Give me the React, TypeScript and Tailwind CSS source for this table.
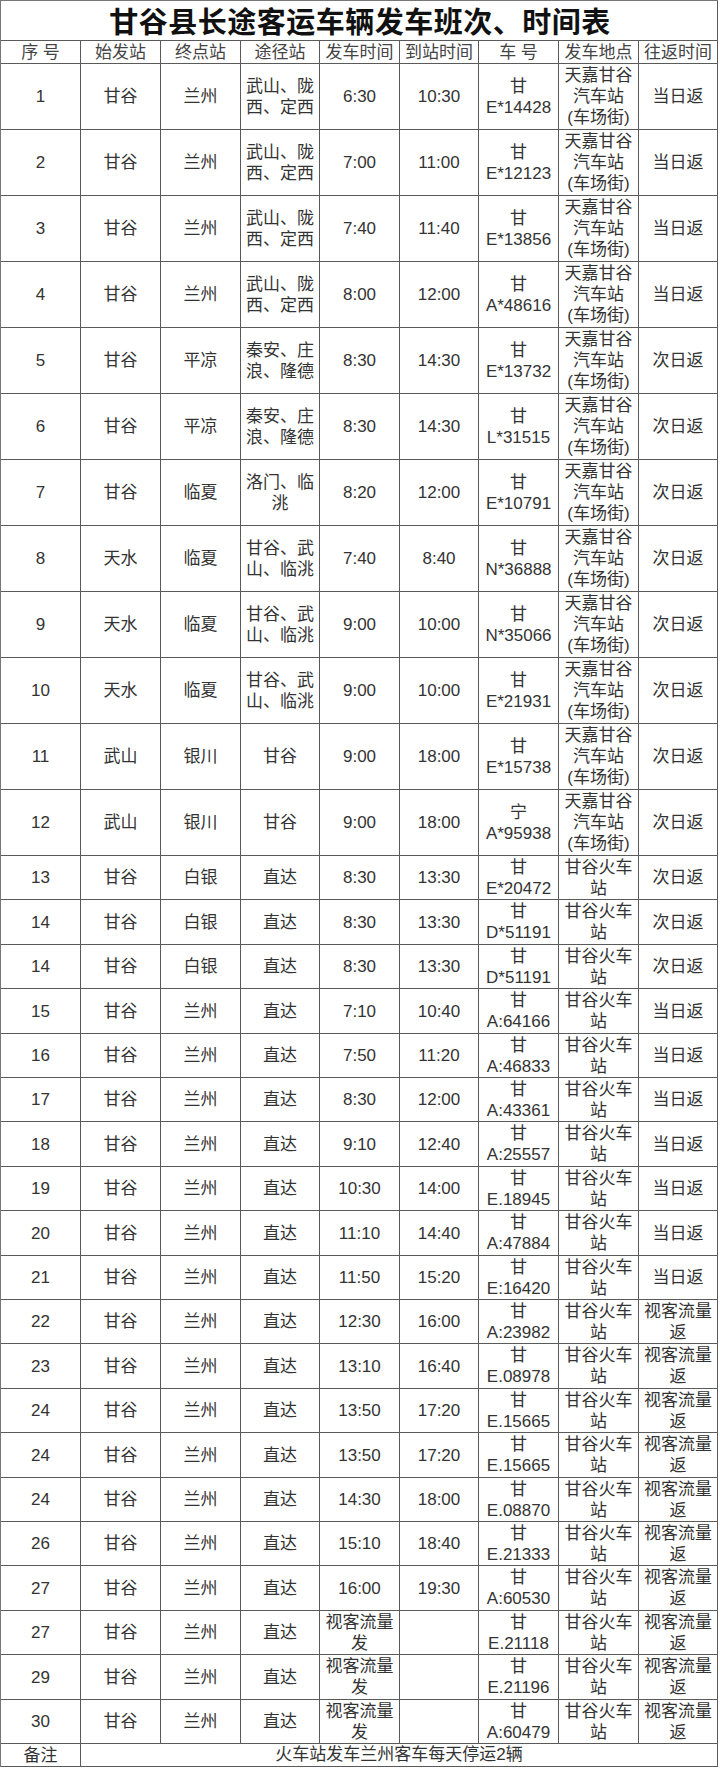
const TJ = "天嘉甘谷/汽车站/(车场街)"
const HC = "甘谷火车/站"
const SK = "视客流量/返"
const SF = "视客流量/发"

const head = ["序 号", "始发站", "终点站", "途径站", "发车时间", "到站时间", "车 号", "发车地点", "往返时间"]

// rows 1-12 (three-line rows)
const tallRows = [
  ["1", "甘谷", "兰州", "武山、陇/西、定西", "6:30", "10:30", "甘/E*14428", TJ, "当日返"],
  ["2", "甘谷", "兰州", "武山、陇/西、定西", "7:00", "11:00", "甘/E*12123", TJ, "当日返"],
  ["3", "甘谷", "兰州", "武山、陇/西、定西", "7:40", "11:40", "甘/E*13856", TJ, "当日返"],
  ["4", "甘谷", "兰州", "武山、陇/西、定西", "8:00", "12:00", "甘/A*48616", TJ, "当日返"],
  ["5", "甘谷", "平凉", "秦安、庄/浪、隆德", "8:30", "14:30", "甘/E*13732", TJ, "次日返"],
  ["6", "甘谷", "平凉", "秦安、庄/浪、隆德", "8:30", "14:30", "甘/L*31515", TJ, "次日返"],
  ["7", "甘谷", "临夏", "洛门、临/洮", "8:20", "12:00", "甘/E*10791", TJ, "次日返"],
  ["8", "天水", "临夏", "甘谷、武/山、临洮", "7:40", "8:40", "甘/N*36888", TJ, "次日返"],
  ["9", "天水", "临夏", "甘谷、武/山、临洮", "9:00", "10:00", "甘/N*35066", TJ, "次日返"],
  ["10", "天水", "临夏", "甘谷、武/山、临洮", "9:00", "10:00", "甘/E*21931", TJ, "次日返"],
  ["11", "武山", "银川", "甘谷", "9:00", "18:00", "甘/E*15738", TJ, "次日返"],
  ["12", "武山", "银川", "甘谷", "9:00", "18:00", "宁/A*95938", TJ, "次日返"],
]

// rows 13-30 (two-line rows)
const shortRows = [
  ["13", "甘谷", "白银", "直达", "8:30", "13:30", "甘/E*20472", HC, "次日返"],
  ["14", "甘谷", "白银", "直达", "8:30", "13:30", "甘/D*51191", HC, "次日返"],
  ["14", "甘谷", "白银", "直达", "8:30", "13:30", "甘/D*51191", HC, "次日返"],
  ["15", "甘谷", "兰州", "直达", "7:10", "10:40", "甘/A:64166", HC, "当日返"],
  ["16", "甘谷", "兰州", "直达", "7:50", "11:20", "甘/A:46833", HC, "当日返"],
  ["17", "甘谷", "兰州", "直达", "8:30", "12:00", "甘/A:43361", HC, "当日返"],
  ["18", "甘谷", "兰州", "直达", "9:10", "12:40", "甘/A:25557", HC, "当日返"],
  ["19", "甘谷", "兰州", "直达", "10:30", "14:00", "甘/E.18945", HC, "当日返"],
  ["20", "甘谷", "兰州", "直达", "11:10", "14:40", "甘/A:47884", HC, "当日返"],
  ["21", "甘谷", "兰州", "直达", "11:50", "15:20", "甘/E:16420", HC, "当日返"],
  ["22", "甘谷", "兰州", "直达", "12:30", "16:00", "甘/A:23982", HC, SK],
  ["23", "甘谷", "兰州", "直达", "13:10", "16:40", "甘/E.08978", HC, SK],
  ["24", "甘谷", "兰州", "直达", "13:50", "17:20", "甘/E.15665", HC, SK],
  ["24", "甘谷", "兰州", "直达", "13:50", "17:20", "甘/E.15665", HC, SK],
  ["24", "甘谷", "兰州", "直达", "14:30", "18:00", "甘/E.08870", HC, SK],
  ["26", "甘谷", "兰州", "直达", "15:10", "18:40", "甘/E.21333", HC, SK],
  ["27", "甘谷", "兰州", "直达", "16:00", "19:30", "甘/A:60530", HC, SK],
  ["27", "甘谷", "兰州", "直达", SF, "", "甘/E.21118", HC, SK],
  ["29", "甘谷", "兰州", "直达", SF, "", "甘/E.21196", HC, SK],
  ["30", "甘谷", "兰州", "直达", SF, "", "甘/A:60479", HC, SK],
]

function Cell({ text, h, className = "" }: { text: string; h: string; className?: string }) {
  return (
    <div className={`${h} flex flex-col items-center justify-center border-r border-b border-[#5a5a5a] text-center leading-[21px] ${className}`}>
      {text.split("/").map((line, i) => (
        <div key={i} className="whitespace-nowrap">{line}</div>
      ))}
    </div>
  )
}

export default function App() {
  return (
    <div className="w-[720px] min-h-[1768px] bg-white font-['Liberation_Sans','Noto_Sans_CJK_SC',sans-serif] text-[17px] text-[#333]">
      <div className="grid w-[718px] grid-cols-[80px_80px_80px_79px_80px_79px_80px_80px_79px] border-l border-t border-[#777]">
        <div className="col-span-9 flex h-[40px] items-center justify-center border-r border-b border-[#5a5a5a] pl-[2px] font-['Noto_Sans_CJK_SC',sans-serif] text-[29px] font-bold tracking-[0.5px] text-[#111]">
          甘谷县长途客运车辆发车班次、时间表
        </div>

        {head.map((t, i) => (
          <Cell key={i} text={t} h="h-[23px]" className="whitespace-pre text-[#444] leading-[20px]" />
        ))}

        {tallRows.map((row, r) =>
          row.map((t, c) => <Cell key={`t${r}-${c}`} text={t} h="h-[66px]" />)
        )}

        {shortRows.map((row, r) =>
          row.map((t, c) => (
            <Cell key={`s${r}-${c}`} text={t} h={r % 5 === 1 || r % 5 === 3 ? "h-[45px]" : "h-[44px]"} />
          ))
        )}

        <Cell text="备注" h="h-[23px]" className="leading-[20px]" />
        <div className="col-span-8 flex h-[23px] items-center justify-center border-r border-b border-[#5a5a5a] leading-[20px]">
          火车站发车兰州客车每天停运2辆
        </div>
      </div>
    </div>
  )
}
